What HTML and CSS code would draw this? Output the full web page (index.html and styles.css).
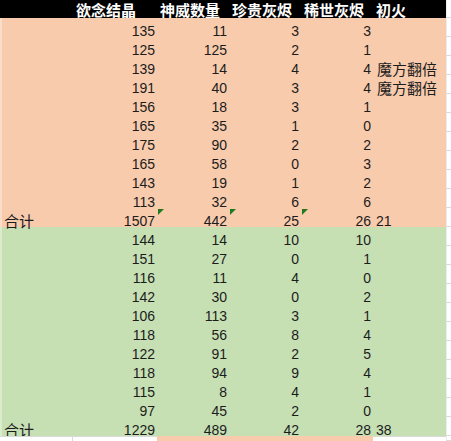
FILE: index.html
```html
<!DOCTYPE html>
<html lang="zh">
<head>
<meta charset="utf-8">
<title>Sheet</title>
<link rel="stylesheet" href="styles.css">
</head>
<body>
<div class="sheet">
  <div class="row head">
    <div class="cell ca"></div>
    <div class="cell cb">欲念结晶</div>
    <div class="cell cc">神威数量</div>
    <div class="cell cd">珍贵灰烬</div>
    <div class="cell ce">稀世灰烬</div>
    <div class="cell cf">初火</div>
    <div class="cell cz"></div>
  </div>

  <div class="row o"><div class="cell ca"></div><div class="cell cb n">135</div><div class="cell cc n">11</div><div class="cell cd n">3</div><div class="cell ce n">3</div><div class="cell cf"></div><div class="cell cz"></div></div>
  <div class="row o"><div class="cell ca"></div><div class="cell cb n">125</div><div class="cell cc n">125</div><div class="cell cd n">2</div><div class="cell ce n">1</div><div class="cell cf"></div><div class="cell cz"></div></div>
  <div class="row o"><div class="cell ca"></div><div class="cell cb n">139</div><div class="cell cc n">14</div><div class="cell cd n">4</div><div class="cell ce n">4</div><div class="cell cf cjk">魔方翻倍</div><div class="cell cz"></div></div>
  <div class="row o"><div class="cell ca"></div><div class="cell cb n">191</div><div class="cell cc n">40</div><div class="cell cd n">3</div><div class="cell ce n">4</div><div class="cell cf cjk">魔方翻倍</div><div class="cell cz"></div></div>
  <div class="row o"><div class="cell ca"></div><div class="cell cb n">156</div><div class="cell cc n">18</div><div class="cell cd n">3</div><div class="cell ce n">1</div><div class="cell cf"></div><div class="cell cz"></div></div>
  <div class="row o"><div class="cell ca"></div><div class="cell cb n">165</div><div class="cell cc n">35</div><div class="cell cd n">1</div><div class="cell ce n">0</div><div class="cell cf"></div><div class="cell cz"></div></div>
  <div class="row o"><div class="cell ca"></div><div class="cell cb n">175</div><div class="cell cc n">90</div><div class="cell cd n">2</div><div class="cell ce n">2</div><div class="cell cf"></div><div class="cell cz"></div></div>
  <div class="row o"><div class="cell ca"></div><div class="cell cb n">165</div><div class="cell cc n">58</div><div class="cell cd n">0</div><div class="cell ce n">3</div><div class="cell cf"></div><div class="cell cz"></div></div>
  <div class="row o"><div class="cell ca"></div><div class="cell cb n">143</div><div class="cell cc n">19</div><div class="cell cd n">1</div><div class="cell ce n">2</div><div class="cell cf"></div><div class="cell cz"></div></div>
  <div class="row o"><div class="cell ca"></div><div class="cell cb n">113</div><div class="cell cc n">32</div><div class="cell cd n">6</div><div class="cell ce n">6</div><div class="cell cf"></div><div class="cell cz"></div></div>
  <div class="row o"><div class="cell ca cjk">合计</div><div class="cell cb n">1507</div><div class="cell cc n tri">442</div><div class="cell cd n tri">25</div><div class="cell ce n tri">26</div><div class="cell cf">21</div><div class="cell cz"></div></div>

  <div class="row g"><div class="cell ca"></div><div class="cell cb n">144</div><div class="cell cc n">14</div><div class="cell cd n">10</div><div class="cell ce n">10</div><div class="cell cf"></div><div class="cell cz"></div></div>
  <div class="row g"><div class="cell ca"></div><div class="cell cb n">151</div><div class="cell cc n">27</div><div class="cell cd n">0</div><div class="cell ce n">1</div><div class="cell cf"></div><div class="cell cz"></div></div>
  <div class="row g"><div class="cell ca"></div><div class="cell cb n">116</div><div class="cell cc n">11</div><div class="cell cd n">4</div><div class="cell ce n">0</div><div class="cell cf"></div><div class="cell cz"></div></div>
  <div class="row g"><div class="cell ca"></div><div class="cell cb n">142</div><div class="cell cc n">30</div><div class="cell cd n">0</div><div class="cell ce n">2</div><div class="cell cf"></div><div class="cell cz"></div></div>
  <div class="row g"><div class="cell ca"></div><div class="cell cb n">106</div><div class="cell cc n">113</div><div class="cell cd n">3</div><div class="cell ce n">1</div><div class="cell cf"></div><div class="cell cz"></div></div>
  <div class="row g"><div class="cell ca"></div><div class="cell cb n">118</div><div class="cell cc n">56</div><div class="cell cd n">8</div><div class="cell ce n">4</div><div class="cell cf"></div><div class="cell cz"></div></div>
  <div class="row g"><div class="cell ca"></div><div class="cell cb n">122</div><div class="cell cc n">91</div><div class="cell cd n">2</div><div class="cell ce n">5</div><div class="cell cf"></div><div class="cell cz"></div></div>
  <div class="row g"><div class="cell ca"></div><div class="cell cb n">118</div><div class="cell cc n">94</div><div class="cell cd n">9</div><div class="cell ce n">4</div><div class="cell cf"></div><div class="cell cz"></div></div>
  <div class="row g"><div class="cell ca"></div><div class="cell cb n">115</div><div class="cell cc n">8</div><div class="cell cd n">4</div><div class="cell ce n">1</div><div class="cell cf"></div><div class="cell cz"></div></div>
  <div class="row g"><div class="cell ca"></div><div class="cell cb n">97</div><div class="cell cc n">45</div><div class="cell cd n">2</div><div class="cell ce n">0</div><div class="cell cf"></div><div class="cell cz"></div></div>
  <div class="row g"><div class="cell ca cjk">合计</div><div class="cell cb n">1229</div><div class="cell cc n">489</div><div class="cell cd n">42</div><div class="cell ce n">28</div><div class="cell cf">38</div><div class="cell cz"></div></div>

  <div class="row end">
    <div class="cell ca"></div>
    <div class="cell cb"></div>
    <div class="cell cc"></div>
    <div class="cell cd"></div>
    <div class="cell ce"></div>
    <div class="cell cf"></div>
    <div class="cell cz"></div>
  </div>
</div>
</body>
</html>
```

FILE: styles.css
```css
html, body {
  margin: 0;
  padding: 0;
  background: #ffffff;
}

.sheet {
  width: 451px;
  display: flex;
  flex-direction: column;
  font-family: "Liberation Sans", "Noto Sans CJK SC", sans-serif;
  font-size: 14px;
  color: #1c1c1c;
}

.row {
  display: flex;
  height: 19px;
}

.cell {
  box-sizing: border-box;
  height: 100%;
  padding: 8px 4px 0 4px;
  line-height: 11px;
  white-space: nowrap;
  overflow: visible;
  position: relative;
  flex: none;
}

.ca { width: 73px; }
.cb { width: 84px; }
.cc, .cd, .ce { width: 72px; }
.cf { width: 73px; padding-left: 3px; }
.cz {
  flex: 1;
  background: #ffffff;
  border-bottom: 1px solid #dadada;
  border-left: 1px solid #ececec;
  padding: 0;
}

.n {
  text-align: right;
  padding-right: 2px;
}

.cjk {
  font-size: 15px;
}

.cf.cjk { padding-left: 4px; }

.head {
  height: 18px;
  background: #000000;
  color: #ffffff;
  font-weight: bold;
  font-size: 15px;
}

.head .cell {
  padding-top: 3px;
  line-height: 15px;
  padding-left: 3px;
}

.o { background: #f8cbad; }
.g { background: #c6e0b4; }

.o .ca, .g .ca {
  box-shadow: inset 2px 0 0 rgba(255, 255, 255, 0.35);
}

.tri::before {
  content: "";
  position: absolute;
  top: 1px;
  left: 1px;
  width: 0;
  height: 0;
  border-top: 6px solid #1f7a1f;
  border-right: 6px solid transparent;
}

.end {
  height: 5px;
}

.end .cell { padding: 0; }
.end .ca {
  background: #ffffff;
  border-top: 1px solid #dadada;
  border-right: 1px solid #dadada;
}
.end .cb, .end .cf {
  background: #ffffff;
  border-top: 1px solid #dadada;
}
.end .cc, .end .cd, .end .ce {
  background: #f8cbad;
}
```
